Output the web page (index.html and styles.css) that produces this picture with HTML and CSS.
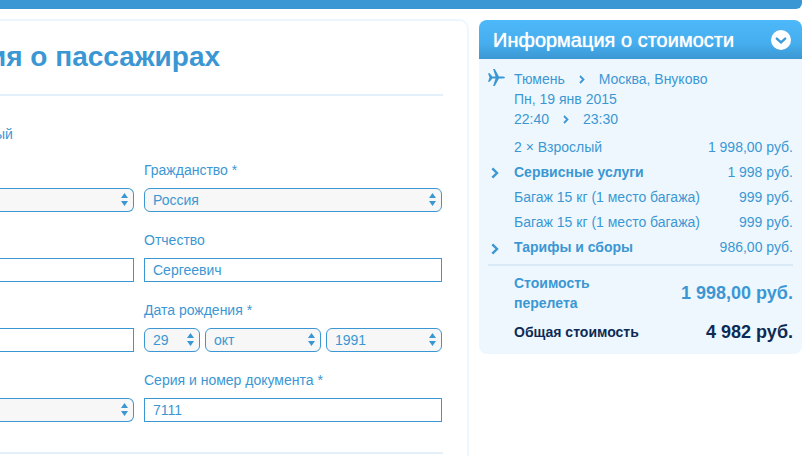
FILE: index.html
```html
<!DOCTYPE html>
<html lang="ru">
<head>
    <meta charset="UTF-8">
    <meta name="viewport" content="width=device-width, initial-scale=1.0">
    <title>Информация о пассажирах</title>
    <link rel="stylesheet" href="styles.css">
</head>
<body>
    <!-- shared icons -->
    <svg class="sprite" aria-hidden="true">
        <symbol id="updown" viewBox="0 0 7 13">
            <path d="M3.5 0L7 5H0zM3.5 13L0 8H7z" fill="currentColor"/>
        </symbol>
        <symbol id="chevron" viewBox="0 0 6 9">
            <path d="M1 1L4.5 4.5L1 8" fill="none" stroke="currentColor" stroke-width="1.8"/>
        </symbol>
    </svg>

    <div class="top-bar"></div>

    <div class="page">
        <main class="panel">
            <h1>ия о пассажирах</h1>

            <form class="form">
                <p class="passenger">ый</p>

                <div class="fields">
                    <div class="field no-label">
                        <span class="select">
                            <select aria-label="Пол"><option></option></select>
                            <svg><use href="#updown"/></svg>
                        </span>
                    </div>
                    <div class="field">
                        <label for="country">Гражданство *</label>
                        <span class="select">
                            <select id="country"><option>Россия</option></select>
                            <svg><use href="#updown"/></svg>
                        </span>
                    </div>

                    <div class="field no-label">
                        <input type="text" aria-label="Имя">
                    </div>
                    <div class="field">
                        <label for="patronymic">Отчество</label>
                        <input type="text" id="patronymic" value="Сергеевич">
                    </div>

                    <div class="field no-label">
                        <input type="text" aria-label="Фамилия">
                    </div>
                    <div class="field">
                        <label for="day">Дата рождения *</label>
                        <div class="date">
                            <span class="select">
                                <select id="day"><option>29</option></select>
                                <svg><use href="#updown"/></svg>
                            </span>
                            <span class="select">
                                <select aria-label="Месяц"><option>окт</option></select>
                                <svg><use href="#updown"/></svg>
                            </span>
                            <span class="select">
                                <select aria-label="Год"><option>1991</option></select>
                                <svg><use href="#updown"/></svg>
                            </span>
                        </div>
                    </div>

                    <div class="field no-label">
                        <span class="select">
                            <select aria-label="Тип документа"><option></option></select>
                            <svg><use href="#updown"/></svg>
                        </span>
                    </div>
                    <div class="field">
                        <label for="document">Серия и номер документа *</label>
                        <input type="text" id="document" value="7111">
                    </div>
                </div>
            </form>
        </main>

        <aside class="summary">
            <div class="summary-header">
                <h2>Информация о стоимости</h2>
                <button type="button" aria-label="Свернуть">
                    <svg width="20" height="20" viewBox="0 0 20 20">
                        <circle cx="10" cy="10" r="10" fill="#fff"/>
                        <path d="M5.8 8.6L10 12.4L14.2 8.6" fill="none" stroke="#3d9bd8" stroke-width="2.4" stroke-linecap="round"/>
                    </svg>
                </button>
            </div>

            <div class="summary-body">
                <div class="flight">
                    <svg class="plane" viewBox="0 0 16 16">
                        <path d="M0 4H1.6L4 7H7.1L4.8 0H6.4L10.3 7H13.6Q16 7.2 16 8Q16 8.8 13.6 9H10.3L6.4 16H4.8L7.1 9H4L1.6 12H0L1.4 8z" fill="currentColor"/>
                    </svg>
                    <div>
                        <div class="leg">
                            <span>Тюмень</span>
                            <svg class="chevron"><use href="#chevron"/></svg>
                            <span>Москва, Внуково</span>
                        </div>
                        <div>Пн, 19 янв 2015</div>
                        <div class="leg">
                            <span>22:40</span>
                            <svg class="chevron"><use href="#chevron"/></svg>
                            <span>23:30</span>
                        </div>
                    </div>
                </div>

                <table class="prices">
                    <tbody>
                        <tr>
                            <td class="mark"></td>
                            <td>2 × Взрослый</td>
                            <td class="price">1 998,00 руб.</td>
                        </tr>
                        <tr>
                            <td class="mark"><svg class="chevron big"><use href="#chevron"/></svg></td>
                            <th scope="row">Сервисные услуги</th>
                            <td class="price">1 998 руб.</td>
                        </tr>
                        <tr>
                            <td class="mark"></td>
                            <td>Багаж 15 кг (1 место багажа)</td>
                            <td class="price">999 руб.</td>
                        </tr>
                        <tr>
                            <td class="mark"></td>
                            <td>Багаж 15 кг (1 место багажа)</td>
                            <td class="price">999 руб.</td>
                        </tr>
                        <tr>
                            <td class="mark"><svg class="chevron big"><use href="#chevron"/></svg></td>
                            <th scope="row">Тарифы и сборы</th>
                            <td class="price">986,00 руб.</td>
                        </tr>
                    </tbody>
                </table>

                <div class="total">
                    <span>Стоимость<br>перелета</span>
                    <strong>1 998,00 руб.</strong>
                </div>
                <div class="total grand">
                    <span>Общая стоимость</span>
                    <strong>4 982 руб.</strong>
                </div>
            </div>
        </aside>
    </div>
</body>
</html>
```
FILE: styles.css
```css
:root {
    --blue: #3b97d3;
    --pale: #eff7fe;
    --line: #e3f0fa;
    --navy: #0b2b55;
}

* {
    box-sizing: border-box;
}

body {
    margin: 0;
    font-family: "Liberation Sans", Arial, sans-serif;
    font-size: 14px;
    line-height: 20px;
    color: var(--blue);
    background-color: #fff;
    overflow: hidden;
}

.sprite {
    display: none;
}

.top-bar {
    height: 9px;
    margin-right: 8px;
    background-color: var(--blue);
    border-bottom-right-radius: 6px;
}

.page {
    display: flex;
    align-items: flex-start;
    gap: 10px;
    padding: 10px 8px 0 0;
}

/* Passenger form */
.panel {
    flex: 1;
    min-width: 0;
    padding: 0 24px 20px 0;
    border: 2px solid var(--pale);
    border-left: none;
    border-bottom: none;
    border-top-right-radius: 10px;
}

h1 {
    margin: 0;
    padding: 16px 0 17px;
    font-size: 28px;
    line-height: 40px;
    text-indent: -11px;
    border-bottom: 2px solid var(--line);
}

.form {
    padding: 28px 0 30px;
    border-bottom: 2px solid var(--line);
}

.passenger {
    margin: 0 0 16px;
    text-indent: -5px;
}

.fields {
    display: grid;
    grid-template-columns: 134px 1fr;
    gap: 18px 10px;
    margin-right: 1px;
}

.field label {
    display: block;
    margin-bottom: 8px;
}

.no-label {
    padding-top: 28px;
}

input,
select {
    display: block;
    width: 100%;
    height: 24px;
    margin: 0;
    padding: 0 8px 1px;
    border: 1px solid var(--blue);
    font: inherit;
    color: inherit;
    background-color: #fff;
}

.select {
    display: block;
    position: relative;
}

select {
    appearance: none;
    border-radius: 6px;
    background-color: #f7f7f7;
}

.select svg {
    position: absolute;
    top: 5px;
    right: 6px;
    width: 7px;
    height: 13px;
    pointer-events: none;
}

.no-label input,
.no-label select {
    border-left: none;
    border-top-left-radius: 0;
    border-bottom-left-radius: 0;
}

.date {
    display: grid;
    grid-template-columns: 56px 1fr 1fr;
    gap: 5px;
}

/* Price summary */
.summary {
    flex: 0 0 323px;
    margin-top: 1px;
    border-radius: 8px;
    background-color: var(--pale);
    overflow: hidden;
}

.summary-header {
    display: flex;
    align-items: center;
    justify-content: space-between;
    height: 39px;
    padding: 0 11px 0 14px;
    color: #fff;
    background: linear-gradient(#4db8fa, #46aeee 60%, #3b97d3);
}

h2 {
    margin: 0;
    font-size: 20px;
    font-weight: normal;
    text-shadow: 0 0 1px #fff;
}

.summary-header button {
    padding: 0;
    border: none;
    background: none;
    cursor: pointer;
}

.summary-header svg {
    display: block;
}

.summary-body {
    padding: 10px 9px;
}

.flight {
    display: flex;
    gap: 9px;
    margin-bottom: 5px;
}

.plane {
    width: 17px;
    height: 17px;
}

.leg {
    display: flex;
    align-items: center;
    gap: 14px;
}

.chevron {
    width: 6px;
    height: 9px;
}

.big {
    width: 8px;
    height: 12px;
}

.prices {
    width: 100%;
    border-collapse: collapse;
    border-bottom: 2px solid #d9eaf6;
}

.prices td,
.prices th {
    height: 25px;
    padding: 0;
    text-align: left;
    white-space: nowrap;
}

.prices tr:last-child > * {
    height: 31px;
    padding-bottom: 4px;
}

.prices .mark {
    width: 26px;
    padding-left: 3px;
}

.mark svg {
    display: block;
    margin-top: 3px;
}

.prices .price {
    text-align: right;
}

.total {
    display: flex;
    align-items: center;
    justify-content: space-between;
    padding: 7px 0 0 26px;
    font-weight: bold;
}

.total strong {
    font-size: 18px;
}

.grand {
    padding-top: 9px;
    padding-bottom: 2px;
    color: var(--navy);
}
```
